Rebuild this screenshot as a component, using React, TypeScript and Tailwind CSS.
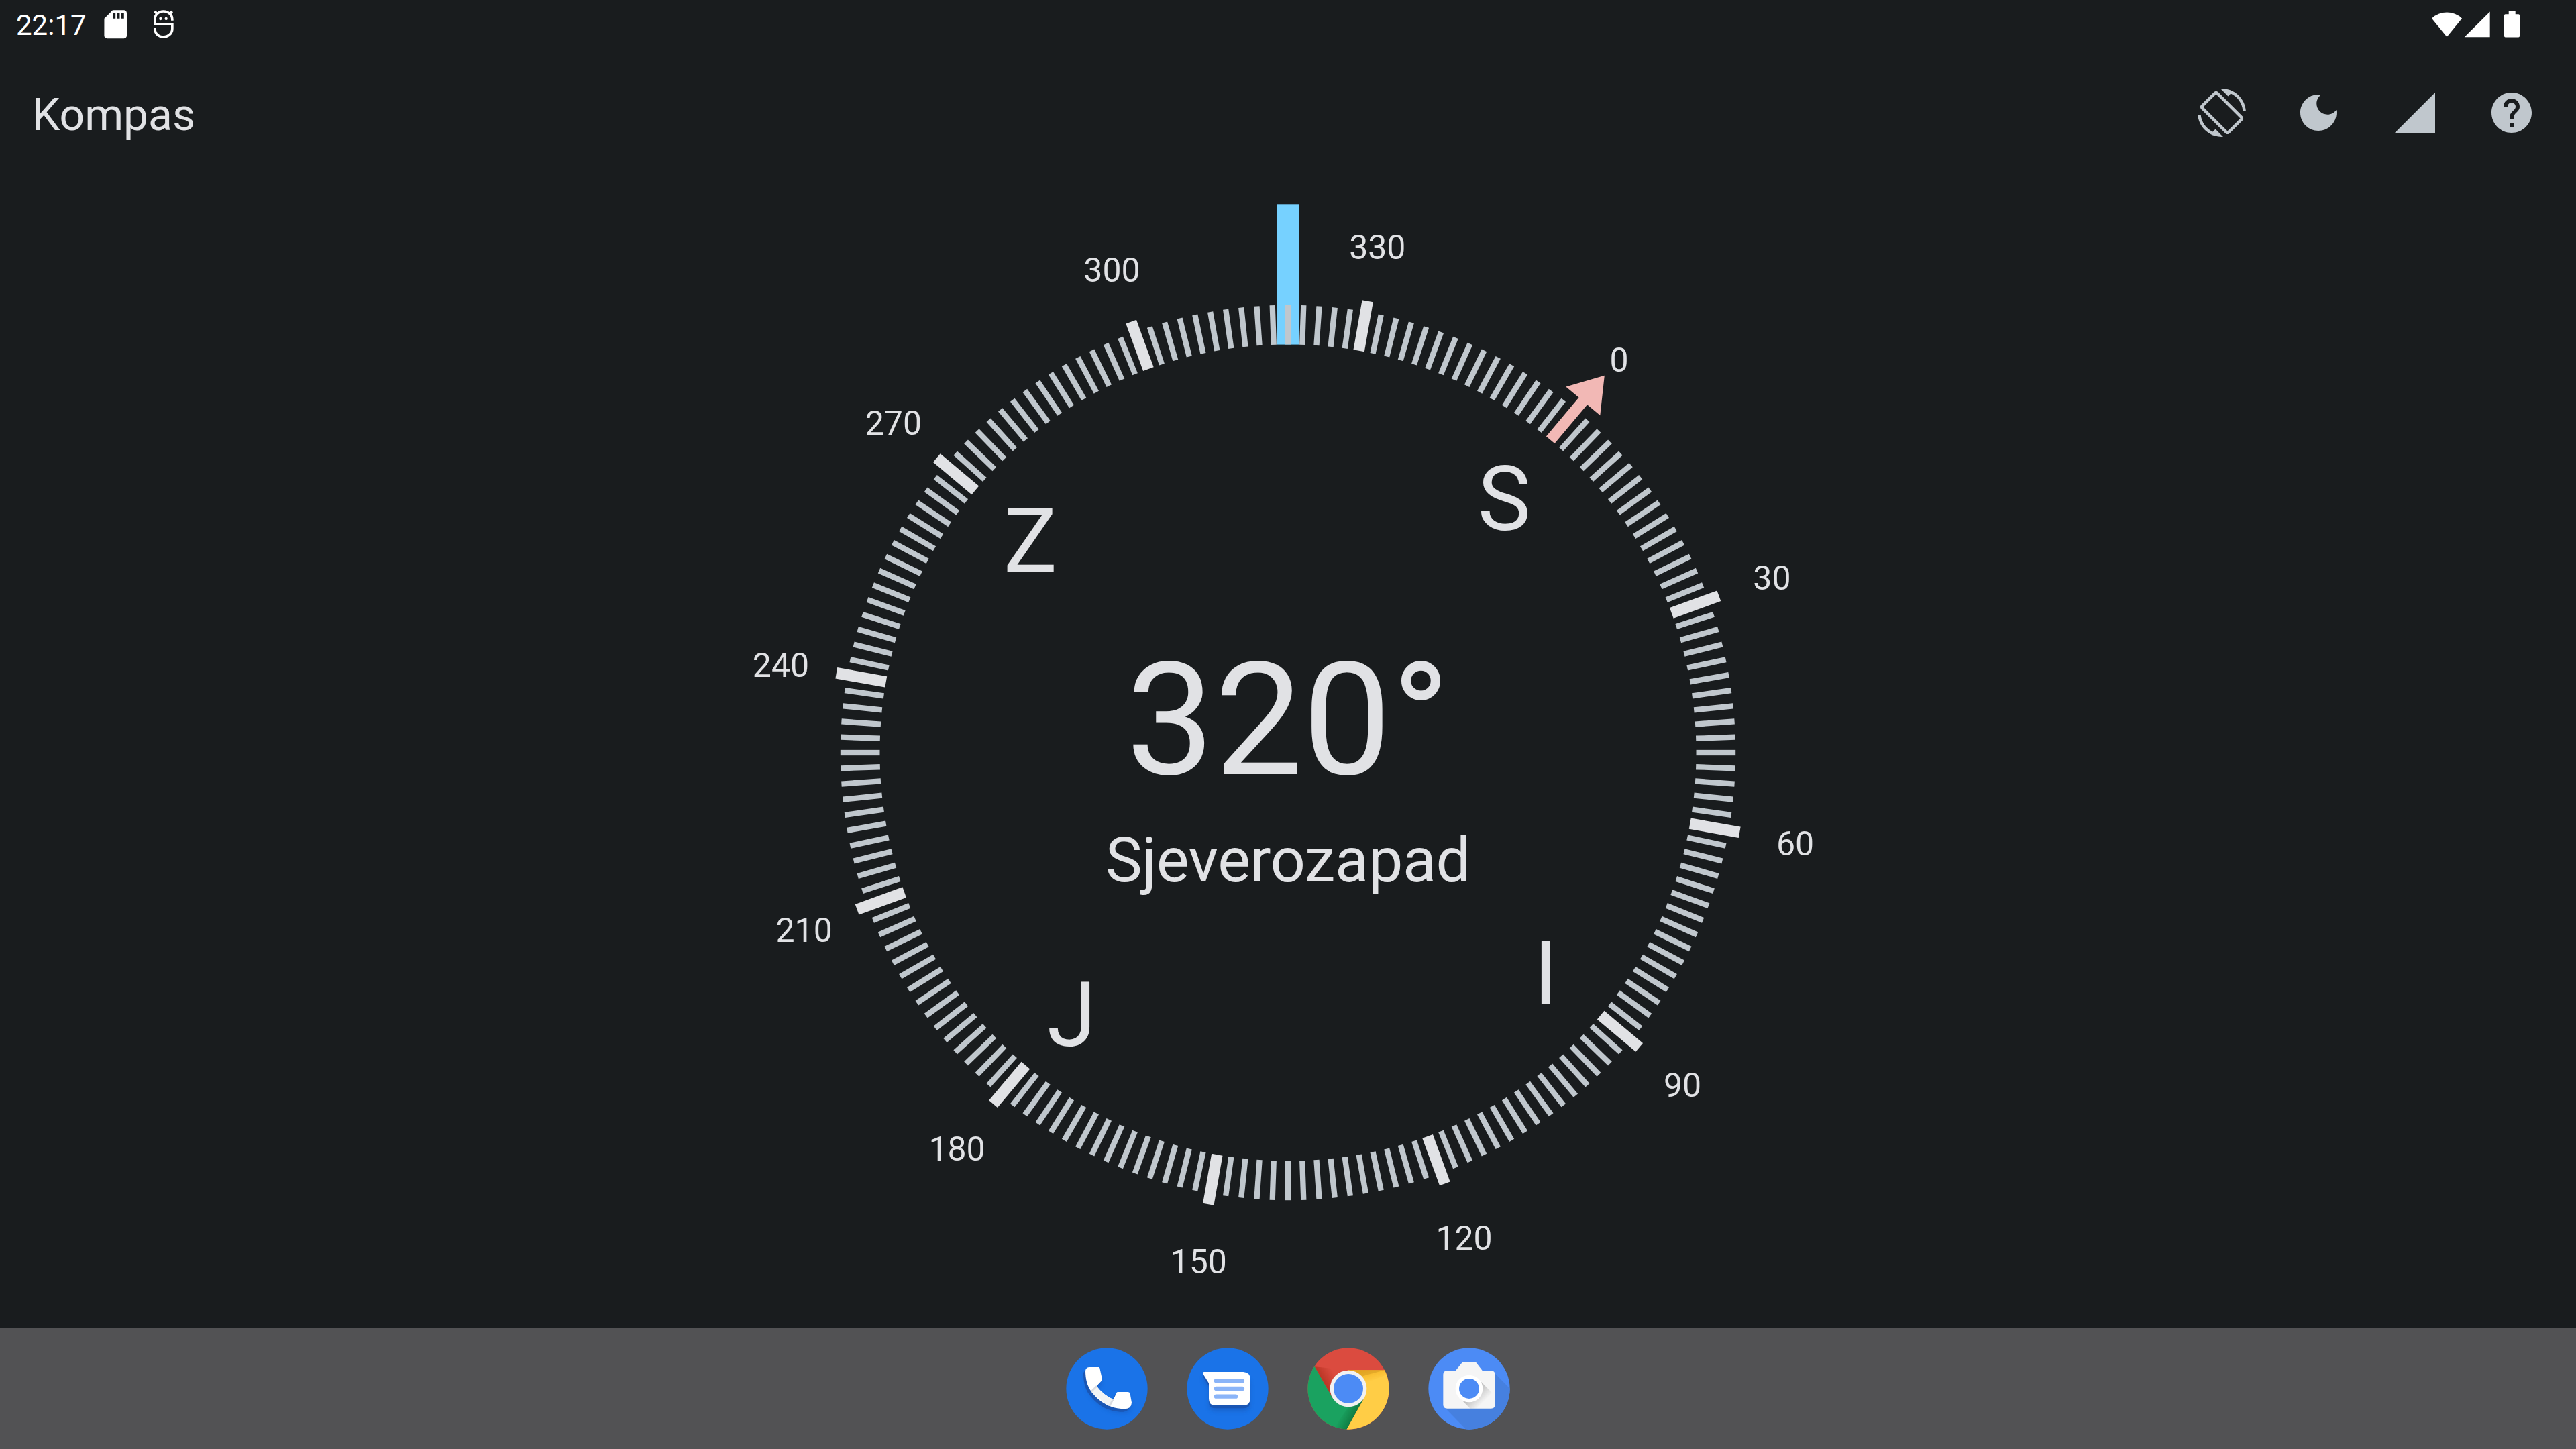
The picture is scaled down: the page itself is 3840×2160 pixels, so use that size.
import type { ReactNode } from "react";

const HEADING = 320;

const rad = (deg: number) => ((deg - HEADING) * Math.PI) / 180;
const polar = (deg: number, r: number) => ({ x: r * Math.sin(rad(deg)), y: -r * Math.cos(rad(deg)) });

const TICKS = Array.from({ length: 180 }, (_, i) => i * 2);
const LABELS = Array.from({ length: 12 }, (_, i) => i * 30);
const CARDINALS = [
  { deg: 0, name: "S" },
  { deg: 90, name: "I" },
  { deg: 180, name: "J" },
  { deg: 270, name: "Z" },
];

function Dial() {
  return (
    <svg className="h-[1716px] w-[1716px]" viewBox="-858 -858 1716 1716" fontFamily="Roboto, sans-serif">
      <rect x={-16.8} y={-817.7} width={33.6} height={209.3} fill="#76d1ff" />
      {TICKS.filter((d) => d !== 0).map((d) => {
        const major = d % 30 === 0;
        return (
          <rect
            key={d}
            transform={`rotate(${d - HEADING})`}
            x={major ? -8.3 : -4.15}
            y={major ? -683.6 : -667.2}
            width={major ? 16.6 : 8.3}
            height={major ? 75.1 : 58.7}
            fill={major ? "#e1e2e5" : "#c0c7cd"}
          />
        );
      })}
      <path
        transform={`rotate(${-HEADING})`}
        d="M-8.2 -608.6V-684.2H-33.3L0 -734L33.3 -684.2H8.2V-608.6Z"
        fill="#f2b8b5"
      />
      {LABELS.map((d) => {
        const p = polar(d, 767.7);
        return (
          <text key={d} x={p.x} y={p.y + 19.8} fontSize={50} textAnchor="middle" fill="#e1e2e5">
            {d}
          </text>
        );
      })}
      {CARDINALS.map(({ deg, name }) => {
        const p = polar(deg, 501.5);
        return (
          <text key={deg} x={p.x} y={p.y + 52.4} fontSize={133.4} textAnchor="middle" fill="#e1e2e5">
            {name}
          </text>
        );
      })}
    </svg>
  );
}

function ActionIcon({ d, label }: { d: string; label: string }) {
  return (
    <button aria-label={label} className="flex h-36 w-36 items-center justify-center">
      <svg className="h-[72px] w-[72px]" viewBox="0 0 24 24" fill="#c0c7cd">
        <path d={d} />
      </svg>
    </button>
  );
}

function StatusBar() {
  return (
    <div className="flex h-[72px] shrink-0 items-center justify-between text-white">
      <div className="flex items-center pl-[24px]">
        <span className="w-[123px] pt-[3px] text-[42px] leading-[69px]">22:17</span>
        <svg className="h-[50.4px] w-[50.4px]" viewBox="0 0 24 24" fill="currentColor">
          <path d="M18 2h-8L4.02 8 4 20c0 1.1.9 2 2 2h12c1.1 0 2-.9 2-2V4c0-1.1-.9-2-2-2zm-6 6h-2V4h2v4zm3 0h-2V4h2v4zm3 0h-2V4h2v4z" />
        </svg>
        <svg className="ml-[32px] h-[42px] w-[30px]" viewBox="688 45 90 126" fill="none" stroke="white" strokeWidth="11">
          <path d="M771.500 92V88C771.500 66 754 51 732 51S693.500 66 693.500 88V108H771.500V128C771.500 149 754 165 732 165S693.500 149 693.500 128V124" />
          <path d="M704 63L693 51M760 63L771 51" />
          <circle cx="719" cy="84" r="6.500" fill="white" stroke="none" />
          <circle cx="744" cy="84" r="6.500" fill="white" stroke="none" />
        </svg>
      </div>
      <svg className="mr-[84px] h-[39px] w-[131px]" viewBox="0 0 131 39" fill="currentColor">
        <path d="M22.500 38L0 10.400A33 33 0 0 1 45 10.400Z" />
        <path d="M48.700 38.200H86.700V0.400Z" />
        <path d="M114.700 0h10v4.200h4.600a1.800 1.800 0 0 1 1.700 1.800v30.800a1.800 1.800 0 0 1 -1.800 1.800h-19.400a1.800 1.800 0 0 1 -1.800 -1.800v-30.800a1.800 1.800 0 0 1 1.800 -1.800h4.900z" />
      </svg>
    </div>
  );
}

function AppBar() {
  return (
    <header className="flex h-48 shrink-0 items-center justify-between pr-6 pl-12">
      <h1 className="pt-[7px] text-[66px] leading-none text-[#e1e2e5]">Kompas</h1>
      <div className="flex">
        <ActionIcon
          label="Rotacija"
          d="M16.480 2.520c3.270 1.550 5.610 4.720 5.970 8.480h1.500C23.440 4.840 18.290 0 12 0l-.66.03 3.810 3.810 1.330-1.320zm-6.250-.77c-.59-.59-1.540-.59-2.120 0L1.750 8.110c-.59.59-.59 1.540 0 2.120l12.020 12.020c.59.59 1.540.59 2.120 0l6.360-6.360c.59-.59.59-1.540 0-2.120L10.230 1.750zm4.600 19.440L2.810 9.170l6.360-6.360 12.020 12.020-6.360 6.360zm-7.310.29C4.250 19.940 1.910 16.760 1.550 13H.05C.56 19.160 5.710 24 12 24l.66-.03-3.810-3.810-1.330 1.320z"
        />
        <ActionIcon
          label="Tamni način"
          d="M12 3c-4.970 0-9 4.030-9 9s4.030 9 9 9 9-4.030 9-9c0-.46-.04-.92-.1-1.360-.98 1.370-2.580 2.260-4.400 2.260-2.980 0-5.400-2.420-5.400-5.400 0-1.810.89-3.420 2.260-4.400-.44-.06-.9-.1-1.360-.1z"
        />
        <ActionIcon label="Signal" d="M2 22h20V2z" />
        <ActionIcon
          label="Pomoć"
          d="M12 2C6.480 2 2 6.480 2 12s4.480 10 10 10 10-4.480 10-10S17.520 2 12 2zm1 17h-2v-2h2v2zm2.070-7.750l-.9.92C13.450 12.900 13 13.500 13 15h-2v-.5c0-1.100.45-2.100 1.170-2.830l1.240-1.260c.37-.36.59-.86.59-1.410 0-1.100-.9-2-2-2s-2 .9-2 2H8c0-2.210 1.790-4 4-4s4 1.790 4 4c0 .88-.36 1.680-.93 2.250z"
        />
      </div>
    </header>
  );
}

function DockIcon({ viewBox, children }: { viewBox: string; children: ReactNode }) {
  return (
    <svg className="h-[122px] w-[122px]" viewBox={viewBox}>
      {children}
    </svg>
  );
}

const HANDSET =
  "M190 204H233Q237 204 238 208L249 258Q250 261 247 264L224 289Q252 327 299 349L313 319Q315 315 319 315H365Q372 315 374 323L381 362Q380 388 352 391C285 391 238 362 200 313C182 288 174 256 174 220Q176 206 190 204Z";
const BUBBLE = "M705 225H880Q911 227 911 256V346Q911 375 880 375H756Q726 375 726 346V275L700 234Q697 226 705 225Z";

function Dock() {
  return (
    <nav className="flex h-[180px] shrink-0 items-center justify-center gap-[58px] bg-[#525254]">
      <DockIcon viewBox="87 117 366 366">
        <defs>
          <filter id="soft" x="-30%" y="-30%" width="160%" height="160%">
            <feGaussianBlur stdDeviation="10" />
          </filter>
          <clipPath id="handset">
            <path d={HANDSET} />
          </clipPath>
        </defs>
        <circle cx="270" cy="300" r="182" fill="#1a73e8" />
        <path d={HANDSET} transform="translate(-2 20)" fill="#174ea6" opacity="0.35" filter="url(#soft)" />
        <path d={HANDSET} transform="translate(-9 13)" fill="#1a56b4" />
        <path d={HANDSET} fill="white" />
        <g clipPath="url(#handset)">
          <path d="M226 287L198 314L280 380L302 345Z" fill="#f1f3f4" />
          <path d="M225 289L199 314M299 346L281 378" stroke="#dadce0" strokeWidth="8" />
        </g>
      </DockIcon>
      <DockIcon viewBox="627 117 366 366">
        <circle cx="810" cy="300" r="182" fill="#1a73e8" />
        <path d={BUBBLE} transform="translate(0 26)" fill="#174ea6" opacity="0.4" filter="url(#soft)" />
        <path d={BUBBLE} transform="translate(0 13)" fill="#1a56b4" />
        <path d={BUBBLE} fill="white" />
        <path d="M759 264.500H876M759 300H876M759 335H846" stroke="#8ab4f8" strokeWidth="19" strokeLinecap="round" />
      </DockIcon>
      <DockIcon viewBox="87 117 366 366">
        <defs>
          <clipPath id="chrome">
            <circle cx="270" cy="300" r="182" />
          </clipPath>
          <linearGradient id="redShade" gradientUnits="userSpaceOnUse" x1="153" y1="261" x2="205" y2="230">
            <stop offset="0" stopColor="#a52714" stopOpacity="0.6" />
            <stop offset="1" stopColor="#a52714" stopOpacity="0" />
          </linearGradient>
          <linearGradient id="yellowShade" gradientUnits="userSpaceOnUse" x1="330" y1="217" x2="345" y2="275">
            <stop offset="0" stopColor="#ea9a00" stopOpacity="0.55" />
            <stop offset="1" stopColor="#ea9a00" stopOpacity="0" />
          </linearGradient>
          <linearGradient id="greenShade" gradientUnits="userSpaceOnUse" x1="300" y1="418" x2="250" y2="392">
            <stop offset="0" stopColor="#055524" stopOpacity="0.5" />
            <stop offset="1" stopColor="#055524" stopOpacity="0" />
          </linearGradient>
        </defs>
        <g clipPath="url(#chrome)">
          <rect x="87" y="117" width="366" height="366" fill="#db4b3f" />
          <path d="M119 202L191 327L270 300V217Z" fill="url(#redShade)" />
          <path d="M119 202L199 341L270 382L341 341L262 483H80V202Z" fill="#1aa260" />
          <path d="M270 382L341 341L262 483H200Z" fill="url(#greenShade)" />
          <path d="M270 217H460V490H258L341 341Z" fill="#ffcd46" />
          <path d="M270 217H440L450 235L345 275Z" fill="url(#yellowShade)" />
          <path d="M270 217H432L330 245Z" fill="#b8801f" opacity="0.3" />
        </g>
        <circle cx="270" cy="300" r="82" fill="#f1f1f1" />
        <circle cx="270" cy="300" r="66" fill="#4c8bf5" />
      </DockIcon>
      <DockIcon viewBox="627 117 366 366">
        <defs>
          <clipPath id="camera">
            <circle cx="810" cy="300" r="182" />
          </clipPath>
          <linearGradient id="lensShade" gradientUnits="userSpaceOnUse" x1="835" y1="325" x2="872" y2="362">
            <stop offset="0" stopColor="#000" stopOpacity="0.2" />
            <stop offset="1" stopColor="#000" stopOpacity="0" />
          </linearGradient>
        </defs>
        <circle cx="810" cy="300" r="182" fill="#4c8bf5" />
        <path d="M922 229L1010 317V500H813L701 385Z" fill="#4680df" clipPath="url(#camera)" />
        <path d="M779 183H841L869 219H908Q926 221 926 237V372Q926 389 908 389H712Q694 389 694 372V237Q694 220 712 219H750Z" fill="#f5f5f5" />
        <path d="M852 258L926 332V372Q926 389 908 389H815L768 342Z" fill="url(#lensShade)" />
        <circle cx="810" cy="300" r="61" fill="white" />
        <circle cx="810" cy="300" r="45" fill="#4c8bf5" />
      </DockIcon>
    </nav>
  );
}

export default function App() {
  return (
    <div className="flex h-[2160px] w-[3840px] flex-col overflow-hidden bg-[#191c1e] font-[Roboto,sans-serif]">
      <StatusBar />
      <AppBar />
      <main className="relative flex min-h-0 flex-1 items-center justify-center">
        <Dial />
        <div className="absolute inset-0 flex flex-col items-center justify-center gap-[17px] pt-[29px] text-[#e1e2e5]">
          <div className="text-[234.600px] leading-[275px]">320°</div>
          <div className="text-[92px] leading-[110px] tracking-[-0.4px]">Sjeverozapad</div>
        </div>
      </main>
      <Dock />
    </div>
  );
}
